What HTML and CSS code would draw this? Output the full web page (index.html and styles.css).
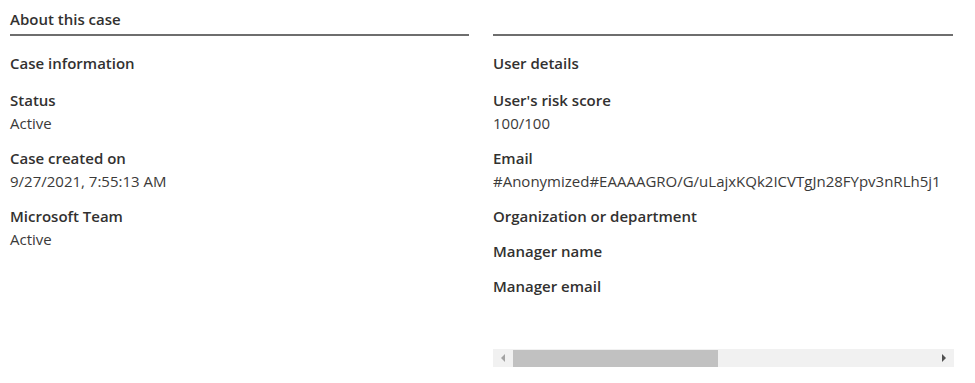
FILE: index.html
```html
<!DOCTYPE html>
<html lang="en">
<head>
    <meta charset="UTF-8">
    <meta name="viewport" content="width=device-width, initial-scale=1.0">
    <title>About this case</title>
    <link rel="stylesheet" href="styles.css">
</head>
<body>
    <div class="case-panel">
        <div class="case-column">
            <div class="column-header">About this case</div>
            <div class="section-title">Case information</div>
            <div class="field">
                <div class="field-label">Status</div>
                <div class="field-value">Active</div>
            </div>
            <div class="field">
                <div class="field-label">Case created on</div>
                <div class="field-value">9/27/2021, 7:55:13 AM</div>
            </div>
            <div class="field">
                <div class="field-label">Microsoft Team</div>
                <div class="field-value">Active</div>
            </div>
        </div>

        <div class="case-column">
            <div class="column-header">&nbsp;</div>
            <div class="scroll-body">
                <div class="section-title">User details</div>
                <div class="field">
                    <div class="field-label">User's risk score</div>
                    <div class="field-value">100/100</div>
                </div>
                <div class="field">
                    <div class="field-label">Email</div>
                    <div class="field-value">#Anonymized#EAAAAGRO/G/uLajxKQk2ICVTgJn28FYpv3nRLh5j1</div>
                </div>
                <div class="field">
                    <div class="field-label">Organization or department</div>
                </div>
                <div class="field">
                    <div class="field-label">Manager name</div>
                </div>
                <div class="field">
                    <div class="field-label">Manager email</div>
                </div>
            </div>
            <div class="h-scrollbar">
                <div class="scroll-arrow left"></div>
                <div class="scroll-track">
                    <div class="scroll-thumb"></div>
                </div>
                <div class="scroll-arrow right"></div>
            </div>
        </div>
    </div>
</body>
</html>
```

FILE: styles.css
```css
body {
    margin: 0;
    font-family: "Open Sans", "Noto Sans", Arial, sans-serif;
    font-size: 15px;
    line-height: 23px;
    color: #323130;
    background: #ffffff;
}
.case-panel {
    display: grid;
    grid-template-columns: 460px 461px;
    column-gap: 23px;
    padding: 0 10px;
    height: 367px;
}
.case-column {
    display: flex;
    flex-direction: column;
    min-width: 0;
}
.column-header {
    font-weight: 600;
    padding: 8px 0 3px;
    border-bottom: 2px solid #6e6e6e;
    margin-right: 1px;
}
.section-title {
    font-weight: 600;
    margin-top: 16px;
    margin-bottom: 14px;
}
.field {
    margin-bottom: 12px;
}
.field-label {
    font-weight: 600;
}
.field-value {
    white-space: nowrap;
    color: #3b3a39;
}
.scroll-body {
    flex: 1;
    overflow: hidden;
}
.h-scrollbar {
    display: flex;
    height: 18px;
    background: #f1f1f1;
}
.scroll-arrow {
    width: 20px;
    display: flex;
    align-items: center;
    justify-content: center;
}
.scroll-arrow::before {
    content: "";
    border-top: 4px solid transparent;
    border-bottom: 4px solid transparent;
}
.scroll-arrow.left::before {
    border-right: 4px solid #a3a3a3;
}
.scroll-arrow.right::before {
    border-left: 4px solid #505050;
}
.scroll-track {
    flex: 1;
    padding: 1px 0 0;
}
.scroll-thumb {
    width: 205px;
    height: 17px;
    background: #c1c1c1;
}
```
